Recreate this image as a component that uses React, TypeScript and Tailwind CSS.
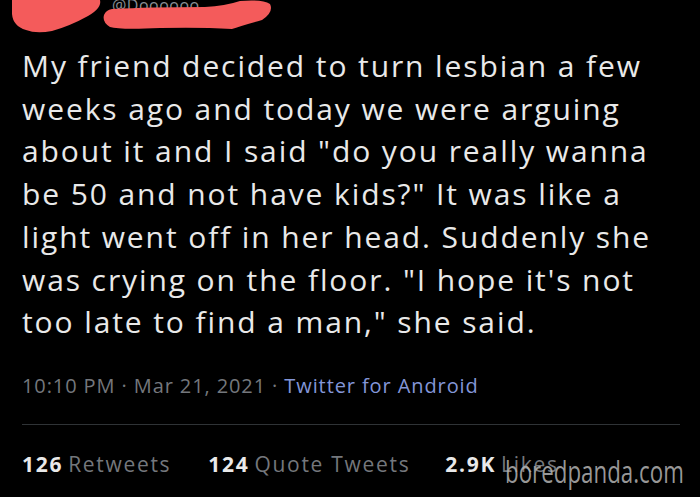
import React from 'react'

const LINES = [
  'My friend decided to turn lesbian a few',
  'weeks ago and today we were arguing',
  'about it and I said "do you really wanna',
  'be 50 and not have kids?" It was like a',
  'light went off in her head. Suddenly she',
  'was crying on the floor. "I hope it\'s not',
  'too late to find a man," she said.',
]

const red = '#f45b5b'

function Scribble() {
  return (
    <svg className="absolute left-0 top-0" width="300" height="40" viewBox="0 0 300 40">
      <path d="M12 0 L100 0 Q102 8 88 16 Q70 26 52 31 Q36 34 26 30 Q13 26 12 14 Z" fill={red} />
      <path d="M112 9 Q150 7 205 7 Q225 6 240 1 Q262 -1 270 4 Q274 12 262 20 Q240 26 232 29 Q200 27 160 28 Q120 30 110 27 Q102 22 104 15 Q106 10 112 9 Z" fill={red} />
    </svg>
  )
}

export default function App() {
  return (
    <div className="relative w-[700px] h-[497px] bg-black overflow-hidden font-['Open_Sans',sans-serif]">
      <div className="absolute left-[112px] -top-[7px] text-[16px] text-[#8a8f95] tracking-[0.5px]">@Doooooo</div>
      <Scribble />

      <div className="pt-[45px] pl-[22px] pr-4">
        <div className="text-[30px] leading-[42.7px] text-[#e9e9e9] tracking-[1.9px]">
          {LINES.map((l, i) => (
            <div key={i} className="whitespace-nowrap">{l}</div>
          ))}
        </div>

        <div className="mt-[27px] text-[20px] text-[#74777c] whitespace-nowrap tracking-[0.9px]">
          10:10 PM · Mar 21, 2021 · <span className="text-[#8396d8]">Twitter for Android</span>
        </div>

        <div className="mt-[23px] w-[658px] h-px bg-[#2f3336]" />

        <div className="mt-[24px] flex items-baseline text-[21px] whitespace-nowrap tracking-[1.7px]">
          <span className="font-bold text-[#e9e9e9]">126</span>
          <span className="ml-[5px] text-[#74777c]">Retweets</span>
          <span className="ml-[37px] font-bold text-[#e9e9e9]">124</span>
          <span className="ml-[5px] text-[#74777c]">Quote Tweets</span>
          <span className="ml-[35px] font-bold text-[#e9e9e9]">2.9K</span>
          <span className="ml-[5px] text-[#74777c]">Likes</span>
        </div>
      </div>

      <div className="absolute left-[505px] top-[456px] origin-left scale-x-[0.72] font-['Open_Sans',sans-serif] text-[31px] leading-none whitespace-nowrap text-[#b4b4b4]/85">boredpanda.com</div>
    </div>
  )
}
